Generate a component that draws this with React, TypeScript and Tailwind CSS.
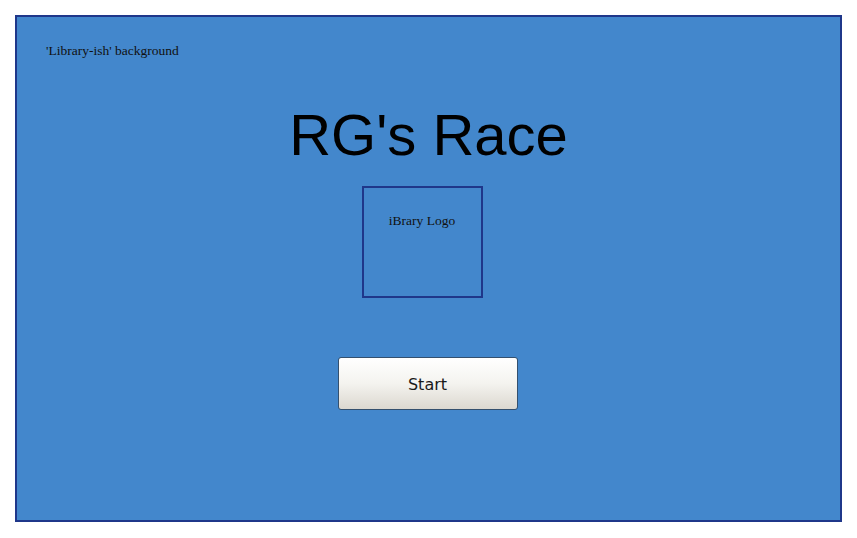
export default function App() {
  return (
    <div className="w-[857px] h-[538px] bg-white pt-[15px] pl-[15px]">
      <div className="w-[827px] h-[507px] bg-[#4387cc] border-2 border-[#1f378a] flex flex-col">
        {/* background label */}
        <div className="pt-[26px] pl-[29px] font-['Liberation_Serif',serif] text-[13.5px] leading-[16px] text-[#111]">
          'Library-ish' background
        </div>

        <div className="flex flex-col items-center">
          <h1 className="mt-[47px] font-['Liberation_Sans',Arial,sans-serif] text-[58px] leading-[58px] text-black">
            RG's Race
          </h1>

          {/* logo placeholder */}
          <div className="mt-[22px] mr-[13px] w-[121px] h-[112px] border-2 border-[#1f378a] pt-[25px] text-center font-['Liberation_Serif',serif] text-[13.5px] leading-[16px] text-[#111]">
            iBrary Logo
          </div>

          <button className="mt-[59px] mr-[2px] w-[180px] h-[53px] pt-[2px] rounded-[3px] border border-[#34506e] bg-gradient-to-b from-white via-[#f4f3ef] to-[#dcd8d0] font-['DejaVu_Sans',Verdana,sans-serif] text-[16px] text-[#1a1a1a]">
            Start
          </button>
        </div>
      </div>
    </div>
  );
}
